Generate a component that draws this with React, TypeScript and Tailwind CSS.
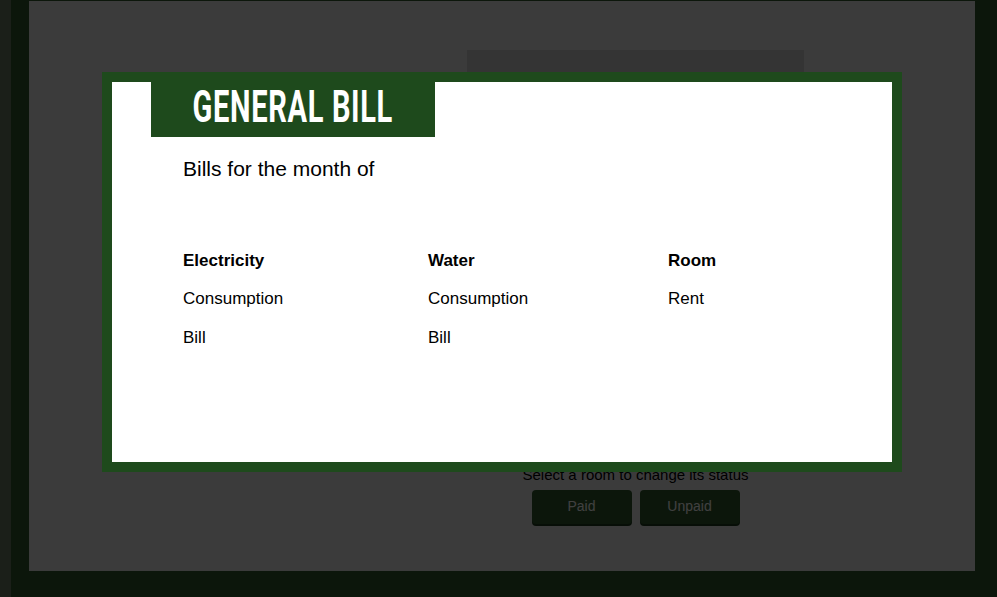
import React from 'react';

const BillModal = () => {
  return (
    <div className="absolute left-[102px] top-[72px] w-[800px] h-[400px] border-[10px] border-[#1e4a1c] bg-white">
      {/* Title tab */}
      <div className="ml-[39px] w-[284px] h-[55px] pt-[3px] bg-[#1e4a1c] flex justify-center">
        <h1 className="text-[44px] leading-[44px] font-bold uppercase text-white font-['Roboto',sans-serif] scale-x-[0.66] whitespace-nowrap tracking-[1px]">
          General Bill
        </h1>
      </div>

      <div className="pl-[71px] font-['Liberation_Sans',Arial,sans-serif] text-black">
        <p className="mt-[20px] text-[21px] leading-[24px]">Bills for the month of</p>

        <div className="mt-[70px] flex text-[17px] leading-[20px]">
          <div className="w-[245px] flex flex-col gap-[18px]">
            <span className="font-bold">Electricity</span>
            <span>Consumption</span>
            <span className="mt-[1px]">Bill</span>
          </div>
          <div className="w-[240px] flex flex-col gap-[18px]">
            <span className="font-bold">Water</span>
            <span>Consumption</span>
            <span className="mt-[1px]">Bill</span>
          </div>
          <div className="flex flex-col gap-[18px]">
            <span className="font-bold">Room</span>
            <span>Rent</span>
          </div>
        </div>
      </div>
    </div>
  );
};

export default function App() {
  return (
    <div className="relative w-[997px] h-[597px] overflow-hidden bg-[#30582c] font-['Liberation_Sans',Arial,sans-serif]">
      <div className="flex h-full">
        {/* side strip */}
        <div className="w-[11px] h-full bg-[#6c7c64]" />

        {/* main panel */}
        <div className="ml-[18px] mt-px w-[946px] h-[570px] bg-[#ececec] flex">
          <div className="ml-[438px] w-[337px] flex flex-col items-center">
            <div className="mt-[49px] w-full h-[415px] bg-[#d0d0d0]" />
            <p className="mt-[1px] text-[15px] leading-[17px] text-black">Select a room to change its status</p>
            <div className="mt-[7px] flex gap-[8px]">
              <button className="w-[100px] h-[34px] rounded-[4px] bg-[#30582c] text-white text-[14px] pb-[2px] shadow-[0_2px_0_#1e3a1c]">
                Paid
              </button>
              <button className="w-[100px] h-[34px] rounded-[4px] bg-[#30582c] text-white text-[14px] pb-[2px] shadow-[0_2px_0_#1e3a1c]">
                Unpaid
              </button>
            </div>
          </div>
        </div>
      </div>

      {/* dim overlay */}
      <div className="absolute inset-0 bg-[rgba(0,0,0,0.75)]" />

      <BillModal />
    </div>
  );
}
